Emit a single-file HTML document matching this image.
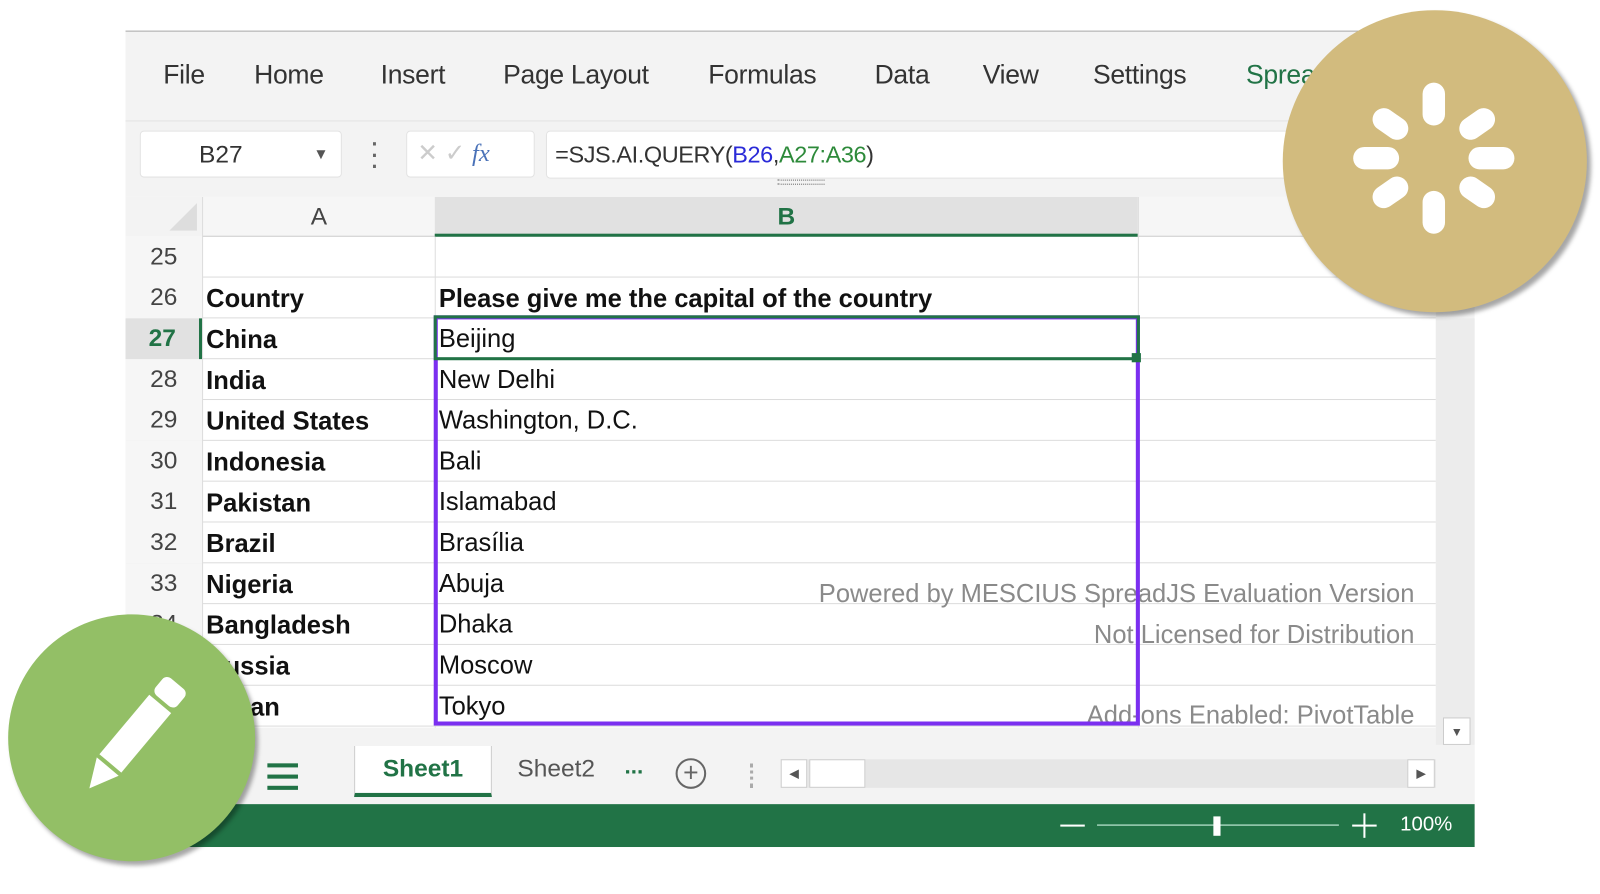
<!DOCTYPE html>
<html><head><meta charset="utf-8"><style>
*{margin:0;padding:0;box-sizing:border-box}
body{width:1600px;height:876px;background:#fff;position:relative;overflow:hidden;font-family:"Liberation Sans",sans-serif;color:#222}
#w{position:absolute;left:0;top:0;width:1600px;height:876px;transform:scale(1.0205);transform-origin:0 0}
.a{position:absolute}
.menu{top:58px;font-size:26px;color:#333;letter-spacing:-0.3px}
.row{position:absolute;left:123px;width:1284px;height:40px;border-bottom:1px solid #dcdcdc}
.rh{position:absolute;left:0;width:75px;height:40px;text-align:center;font-size:24px;color:#444;line-height:40px;background:#f6f6f6}
.ca{position:absolute;left:79px;font-size:25px;font-weight:bold;line-height:42px;color:#111}
.cb{position:absolute;left:307px;font-size:25px;line-height:40px;color:#111}
.wm{position:absolute;font-size:25px;color:#8a8a8a;right:214px}
</style></head><body><div id="w">
<div class="a" style="left:123px;top:30px;width:1322px;height:800px;background:#f3f3f3;border-top:1px solid #aaa"></div>
<div class="a menu" style="left:160px">File</div>
<div class="a menu" style="left:249px">Home</div>
<div class="a menu" style="left:373px">Insert</div>
<div class="a menu" style="left:493px">Page Layout</div>
<div class="a menu" style="left:694px">Formulas</div>
<div class="a menu" style="left:857px">Data</div>
<div class="a menu" style="left:963px">View</div>
<div class="a menu" style="left:1071px">Settings</div>
<div class="a menu" style="left:1221px;color:#217346">Spread</div>
<div class="a" style="left:123px;top:118px;width:1322px;height:75px;background:#f3f3f3;border-top:1px solid #e2e2e2"></div>
<div class="a" style="left:137px;top:128px;width:198px;height:46px;background:#fff;border:1px solid #e3e3e3;border-radius:4px;font-size:24px;line-height:46px;padding-left:57px;color:#333">B27<span style="position:absolute;right:12px;font-size:15px;color:#555">▼</span></div>
<div class="a" style="left:362px;top:134px;width:7px;height:34px;color:#666;font-size:30px;line-height:11px;text-align:center">·<br>·<br>·</div>
<div class="a" style="left:398px;top:128px;width:126px;height:46px;background:#fff;border:1px solid #e3e3e3;border-radius:4px;font-size:24px;line-height:44px;padding-left:10px;color:#ccc">✕ ✓ <i style="color:#4a72b8;font-family:'Liberation Serif',serif">fx</i></div>
<div class="a" style="left:535px;top:128px;width:740px;height:47px;background:#fff;border:1px solid #e3e3e3;border-radius:4px;font-size:23px;line-height:45px;padding-left:8px;color:#333;letter-spacing:-0.4px">=SJS.AI.QUERY(<span style="color:#2a2ad8">B26</span>,<span style="color:#2d8a3a">A27:A36</span>)</div>
<div class="a" style="left:762px;top:176px;width:46px;height:5px;border-top:1px dotted #666;border-bottom:1px dotted #666"></div>
<div class="a" style="left:123px;top:193px;width:1284px;height:520px;background:#fff"></div>
<div class="a" style="left:123px;top:193px;width:75px;height:39px;background:#f3f3f3"></div>
<div class="a" style="left:166px;top:199px;width:0;height:0;border-left:27px solid transparent;border-bottom:27px solid #ddd"></div>
<div class="a" style="left:198px;top:193px;width:228px;height:39px;background:#f6f6f6;border-left:1px solid #ddd;border-bottom:1px solid #ccc;text-align:center;font-size:24px;line-height:39px;color:#444">A</div>
<div class="a" style="left:426px;top:193px;width:689px;height:39px;background:#e1e1e1;border-bottom:3px solid #217346;text-align:center;font-size:24px;line-height:39px;font-weight:bold;color:#217346">B</div>
<div class="a" style="left:1115px;top:193px;width:292px;height:39px;background:#f6f6f6;border-left:1px solid #ddd;border-bottom:1px solid #ccc"></div>
<div class="row" style="top:232px"><div class="rh">25</div></div>
<div class="row" style="top:272px"><div class="rh">26</div><div class="ca">Country</div><div class="cb" style="font-weight:bold;line-height:42px">Please give me the capital of the country</div></div>
<div class="row" style="top:312px"><div class="rh" style="background:#e1e1e1;color:#217346;font-weight:bold;border-right:3px solid #217346">27</div><div class="ca">China</div><div class="cb">Beijing</div></div>
<div class="row" style="top:352px"><div class="rh">28</div><div class="ca">India</div><div class="cb">New Delhi</div></div>
<div class="row" style="top:392px"><div class="rh">29</div><div class="ca">United States</div><div class="cb">Washington, D.C.</div></div>
<div class="row" style="top:432px"><div class="rh">30</div><div class="ca">Indonesia</div><div class="cb">Bali</div></div>
<div class="row" style="top:472px"><div class="rh">31</div><div class="ca">Pakistan</div><div class="cb">Islamabad</div></div>
<div class="row" style="top:512px"><div class="rh">32</div><div class="ca">Brazil</div><div class="cb">Brasília</div></div>
<div class="row" style="top:552px"><div class="rh">33</div><div class="ca">Nigeria</div><div class="cb">Abuja</div></div>
<div class="row" style="top:592px"><div class="rh">34</div><div class="ca">Bangladesh</div><div class="cb">Dhaka</div></div>
<div class="row" style="top:632px"><div class="rh">35</div><div class="ca">Russia</div><div class="cb">Moscow</div></div>
<div class="row" style="top:672px"><div class="rh">36</div><div class="ca">Japan</div><div class="cb">Tokyo</div></div>
<div class="a" style="left:198px;top:232px;width:1px;height:481px;background:#ddd"></div>
<div class="a" style="left:426px;top:232px;width:1px;height:481px;background:#ddd"></div>
<div class="a" style="left:1115px;top:232px;width:1px;height:481px;background:#ddd"></div>
<div class="wm" style="top:568px">Powered by MESCIUS SpreadJS Evaluation Version</div>
<div class="wm" style="top:608px">Not Licensed for Distribution</div>
<div class="wm" style="top:687px">Add-ons Enabled: PivotTable</div>
<div class="a" style="left:425px;top:309px;width:692px;height:402px;border:4px solid #7b2ff0"></div>
<div class="a" style="left:425px;top:309px;width:692px;height:44px;border:3px solid #217346"></div>
<div class="a" style="left:1109px;top:346px;width:9px;height:9px;background:#217346"></div>
<div class="a" style="left:1407px;top:312px;width:38px;height:418px;background:#ececec"></div>
<div class="a" style="left:1414px;top:703px;width:27px;height:27px;background:#fff;border:1px solid #ccc;font-size:12px;text-align:center;line-height:27px;color:#555">▼</div>
<div class="a" style="left:123px;top:730px;width:1322px;height:58px;background:#f3f3f3"></div>
<div class="a" style="left:262px;top:748px;width:30px;height:26px;border-top:4px solid #217346;border-bottom:4px solid #217346"><div style="margin-top:7px;height:4px;background:#217346"></div></div>
<div class="a" style="left:347px;top:731px;width:135px;height:50px;background:#fff;border-left:1px solid #ccc;border-right:1px solid #ccc;border-bottom:4px solid #217346;text-align:center;font-size:24px;font-weight:bold;color:#217346;line-height:46px">Sheet1</div>
<div class="a" style="left:507px;top:740px;font-size:24px;color:#555">Sheet2</div>
<div class="a" style="left:612px;top:738px;font-size:22px;font-weight:bold;color:#217346">...</div>
<div class="a" style="left:662px;top:743px;width:30px;height:30px;border:2px solid #666;border-radius:50%;text-align:center;font-size:26px;line-height:25px;color:#666">+</div>
<div class="a" style="left:735px;top:748px;width:3px;height:24px;border-left:3px dotted #aaa"></div>
<div class="a" style="left:765px;top:744px;width:642px;height:28px;background:#e6e6e6"></div>
<div class="a" style="left:765px;top:744px;width:26px;height:28px;background:#fff;border:1px solid #ccc;font-size:12px;line-height:26px;text-align:center;color:#555">◀</div>
<div class="a" style="left:793px;top:744px;width:55px;height:28px;background:#fff;border:1px solid #ccc"></div>
<div class="a" style="left:1379px;top:744px;width:27px;height:28px;background:#fff;border:1px solid #ccc;font-size:12px;line-height:26px;text-align:center;color:#555">▶</div>
<div class="a" style="left:123px;top:788px;width:1322px;height:42px;background:#217346"></div>
<div class="a" style="left:1039px;top:808px;width:24px;height:2px;background:#fff"></div>
<div class="a" style="left:1075px;top:808px;width:237px;height:1px;background:#dfe"></div>
<div class="a" style="left:1189px;top:800px;width:7px;height:19px;background:#fff"></div>
<div class="a" style="left:1325px;top:808px;width:24px;height:2px;background:#fff"></div>
<div class="a" style="left:1336px;top:797px;width:2px;height:24px;background:#fff"></div>
<div class="a" style="left:1372px;top:797px;font-size:20px;color:#fff">100%</div>
<div class="a" style="left:1257px;top:10px;width:298px;height:296px;border-radius:50%;background:#d2bb7e;box-shadow:4px 4px 4px rgba(0,0,0,.35)"></div>
<svg class="a" style="left:1305px;top:75px" width="200" height="160" viewBox="-100 -80 200 160">
<g stroke="#fff" stroke-width="22" stroke-linecap="round">
<line x1="0" y1="-63" x2="0" y2="-43"/><line x1="0" y1="43" x2="0" y2="63"/>
<line x1="-68" y1="0" x2="-45" y2="0"/><line x1="45" y1="0" x2="68" y2="0"/>
<line x1="-49" y1="-38" x2="-36" y2="-29"/><line x1="36" y1="-29" x2="49" y2="-38"/>
<line x1="-49" y1="38" x2="-36" y2="29"/><line x1="36" y1="29" x2="49" y2="38"/>
</g></svg>
<div class="a" style="left:8px;top:602px;width:242px;height:242px;border-radius:50%;background:#93bf66;box-shadow:3px 4px 4px rgba(0,0,0,.35)"></div>
<svg class="a" style="left:60px;top:655px" width="140" height="135" viewBox="0 0 140 135">
<g transform="translate(70,67) rotate(40)" fill="#fff">
<rect x="-14" y="-68" width="28" height="22" rx="6"/>
<rect x="-14" y="-42" width="28" height="76"/>
<polygon points="-14,38 14,38 0,66"/>
</g></svg>
</div></body></html>
